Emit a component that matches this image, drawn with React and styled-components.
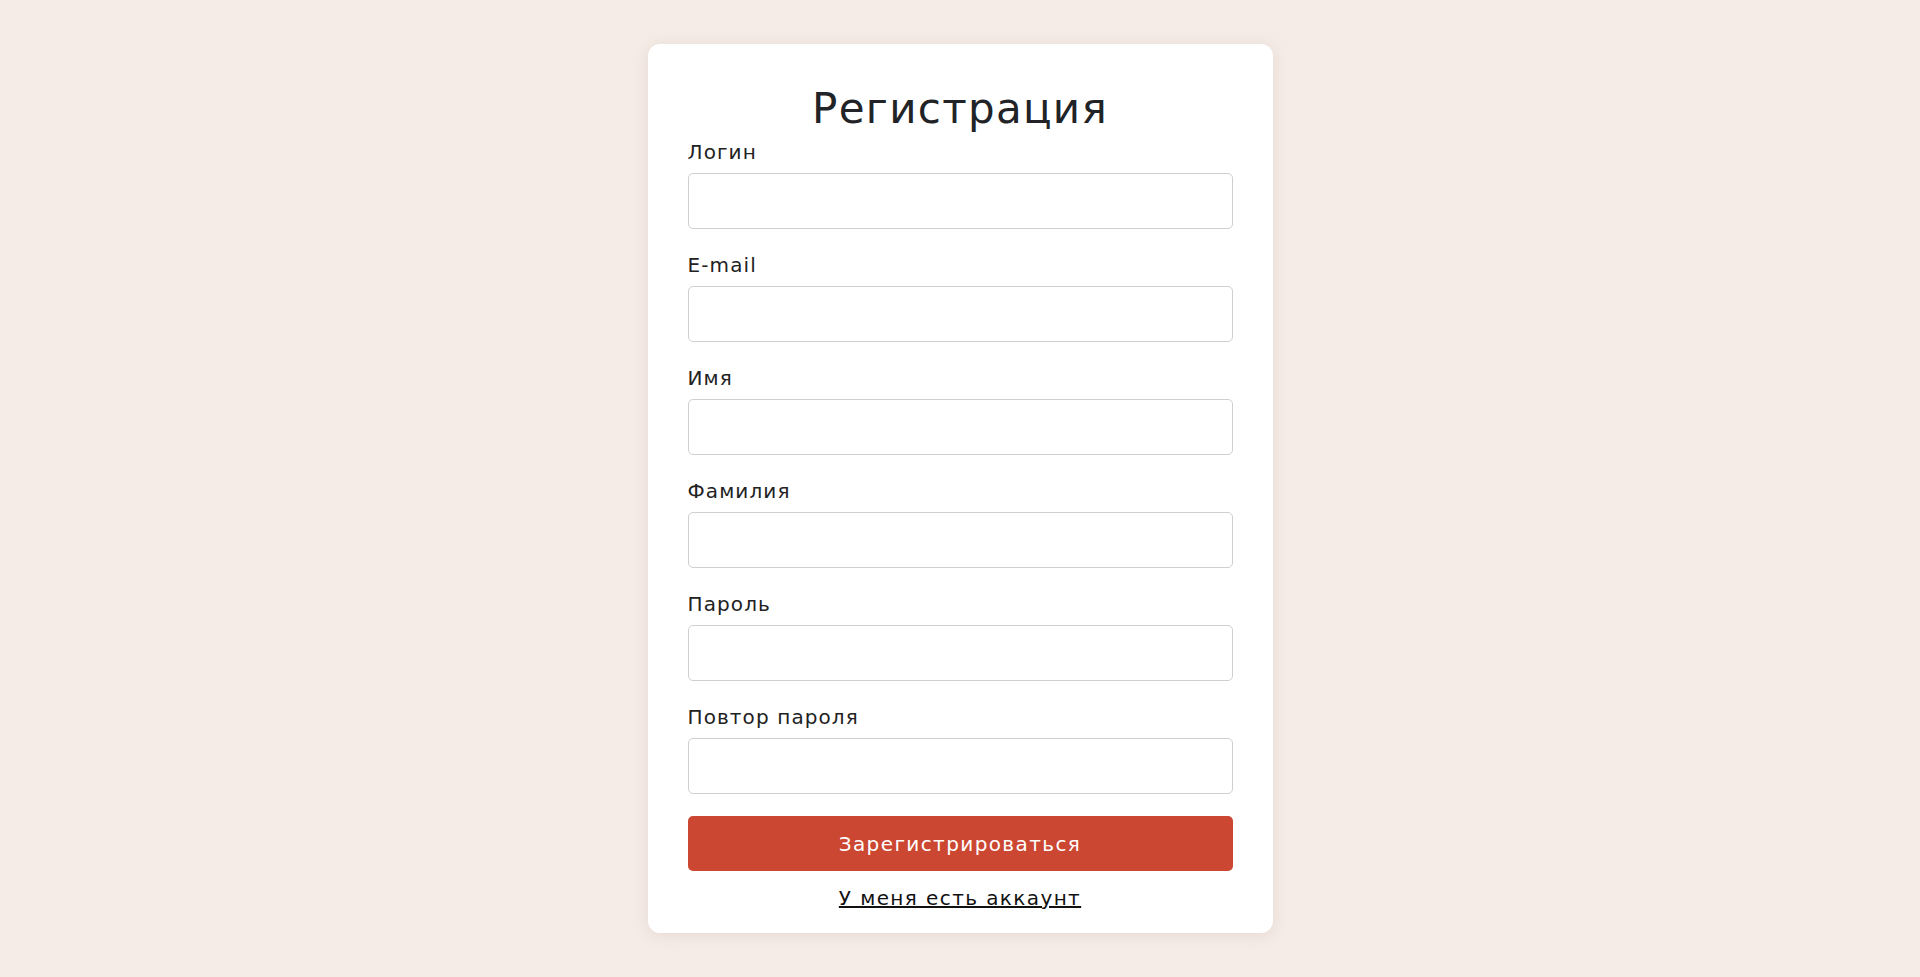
import React from "react"
import styled, { createGlobalStyle } from "styled-components"

const GlobalStyle = createGlobalStyle`
  body {
    margin: 0;
    background: #f5ece7;
    font-family: "DejaVu Sans", "Liberation Sans", sans-serif;
    color: #222;
  }
`

const fields = [
  { id: "login", label: "Логин", type: "text" },
  { id: "email", label: "E-mail", type: "email" },
  { id: "name", label: "Имя", type: "text" },
  { id: "surname", label: "Фамилия", type: "text" },
  { id: "password", label: "Пароль", type: "password" },
  { id: "password2", label: "Повтор пароля", type: "password" },
]

const App = () => {
  return (
    <Page>
      <GlobalStyle />
      <Card>
        <Title>Регистрация</Title>
        <Form onSubmit={(e) => e.preventDefault()}>
          {fields.map((f) => (
            <Field key={f.id}>
              <Label htmlFor={f.id}>{f.label}</Label>
              <Input id={f.id} type={f.type} />
            </Field>
          ))}
          <Button type="submit">Зарегистрироваться</Button>
        </Form>
        <LoginLink href="#">У меня есть аккаунт</LoginLink>
      </Card>
    </Page>
  )
}

const Page = styled.div`
  min-height: 100vh;
  box-sizing: border-box;
  padding-top: 44px;
  display: flex;
  justify-content: center;
  align-items: flex-start;
`

const Card = styled.div`
  width: 625px;
  box-sizing: border-box;
  padding: 41px 40px 23px;
  background: #fff;
  border-radius: 12px;
  box-shadow: 0 2px 16px rgba(120, 70, 50, 0.12);
  display: flex;
  flex-direction: column;
  align-items: center;
`

const Title = styled.h1`
  margin: 0 0 5px;
  font-size: 42px;
  line-height: 48px;
  font-weight: 400;
  letter-spacing: 1.3px;
  color: #212327;
`

const Form = styled.form`
  width: 100%;
  display: flex;
  flex-direction: column;
`

const Field = styled.div`
  display: flex;
  flex-direction: column;
  margin-bottom: 22px;
`

const Label = styled.label`
  font-size: 20px;
  line-height: 28px;
  letter-spacing: 1.1px;
  margin-bottom: 7px;
  color: #222;
`

const Input = styled.input`
  height: 56px;
  box-sizing: border-box;
  border: 1px solid #cfcfcf;
  border-radius: 5px;
  padding: 0 14px;
  font-size: 18px;
  font-family: inherit;
  outline: none;
`

const Button = styled.button`
  height: 55px;
  border: none;
  border-radius: 5px;
  background: #cc4732;
  color: #fff;
  font-family: inherit;
  font-size: 20px;
  letter-spacing: 1.4px;
  cursor: pointer;
`

const LoginLink = styled.a`
  margin-top: 15px;
  font-size: 20px;
  line-height: 24px;
  letter-spacing: 1.4px;
  color: #111;
  text-decoration: underline;
`

export default App
